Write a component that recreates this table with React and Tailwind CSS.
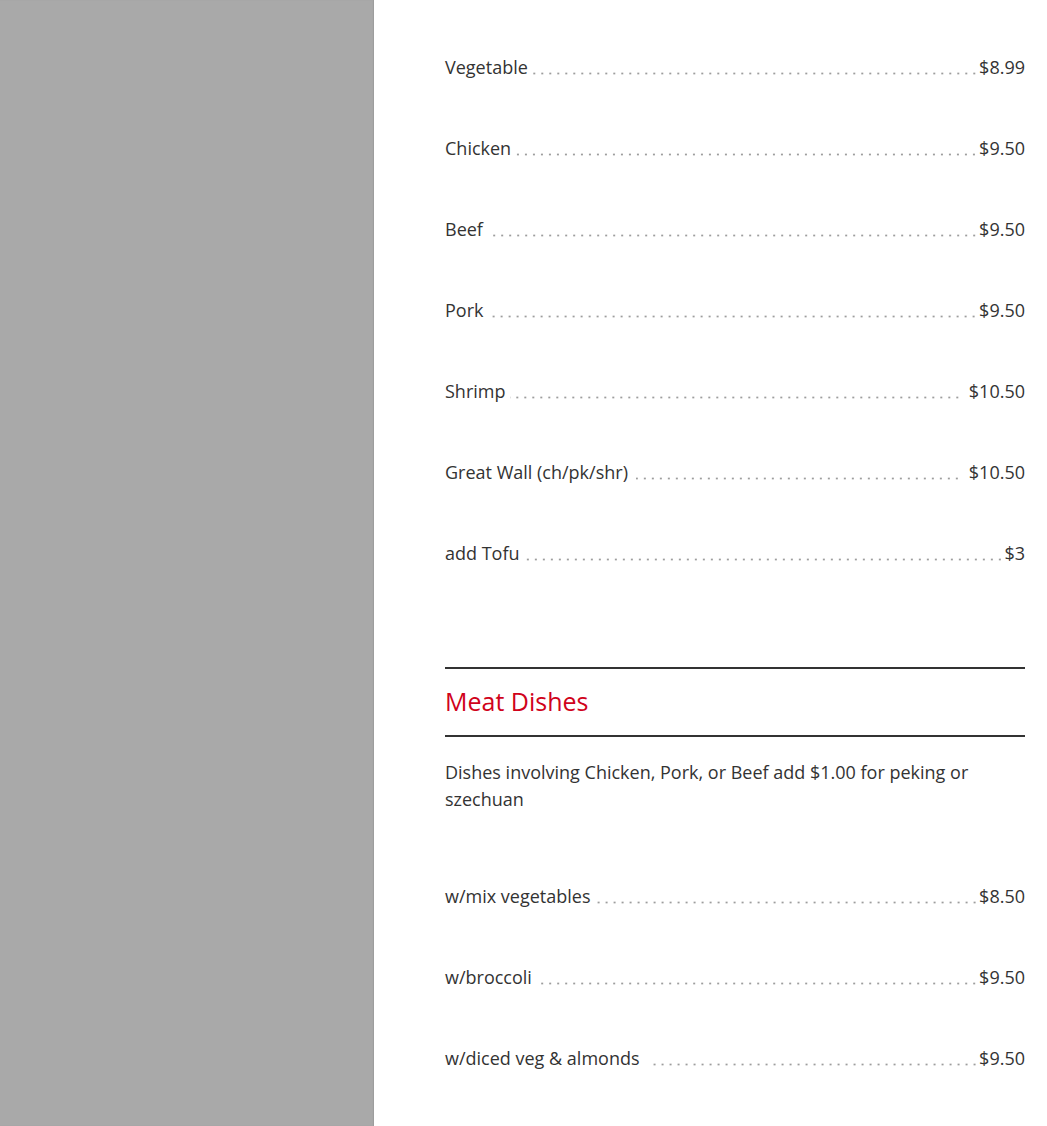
import React from 'react';

const noodles = [
  { name: 'Vegetable', price: '$8.99' },
  { name: 'Chicken', price: '$9.50' },
  { name: 'Beef', price: '$9.50', gap: true },
  { name: 'Pork', price: '$9.50', gap: true },
  { name: 'Shrimp', price: '$10.50', wide: true },
  { name: 'Great Wall (ch/pk/shr)', price: '$10.50', gap: true, wide: true },
  { name: 'add Tofu', price: '$3' },
];

const meat = [
  { name: 'w/mix vegetables', price: '$8.50' },
  { name: 'w/broccoli', price: '$9.50', gap: true },
  { name: 'w/diced veg & almonds', price: '$9.50', gap: true },
];

function MenuRow({ item }) {
  return (
    <div className="flex items-center h-[81px] text-[18px] leading-[27px] text-[#333]">
      <span className="whitespace-nowrap">{item.name}</span>
      <div
        className={`flex-1 h-[3px] mt-[11px] bg-[radial-gradient(circle,#9d9d9d_0.8px,transparent_1.3px)] bg-[length:8px_3px] bg-repeat-x bg-right ${
          item.gap ? 'ml-[8px]' : 'ml-[4px]'
        } ${item.wide ? 'mr-[8px]' : 'mr-[1px]'}`}
      />
      <span className="whitespace-nowrap">{item.price}</span>
    </div>
  );
}

export default function App() {
  return (
    <div className="flex w-full h-[1126px] overflow-hidden bg-white font-['Open_Sans',sans-serif]">
      <aside className="w-[374px] shrink-0 bg-[#a9a9a9] shadow-[inset_-1px_0_1px_rgba(0,0,0,0.08)]" />

      <main className="flex-1 pl-[71px] pr-[22px] pt-[27px]">
        <div className="flex flex-col">
          {noodles.map(item => (
            <MenuRow key={item.name} item={item} />
          ))}
        </div>

        <section className="mt-[73px]">
          <div className="border-t-2 border-b-2 border-[#333] pt-[14px] pb-[16px]">
            <h2 className="text-[25px] leading-[36px] text-[#d0021b]">Meat Dishes</h2>
          </div>
          <p className="mt-[22px] text-[18px] leading-[27px] text-[#333] pr-[40px]">
            Dishes involving Chicken, Pork, or Beef add $1.00 for peking or szechuan
          </p>
          <div className="flex flex-col mt-[43px]">
            {meat.map(item => (
              <MenuRow key={item.name} item={item} />
            ))}
          </div>
        </section>
      </main>
    </div>
  );
}
